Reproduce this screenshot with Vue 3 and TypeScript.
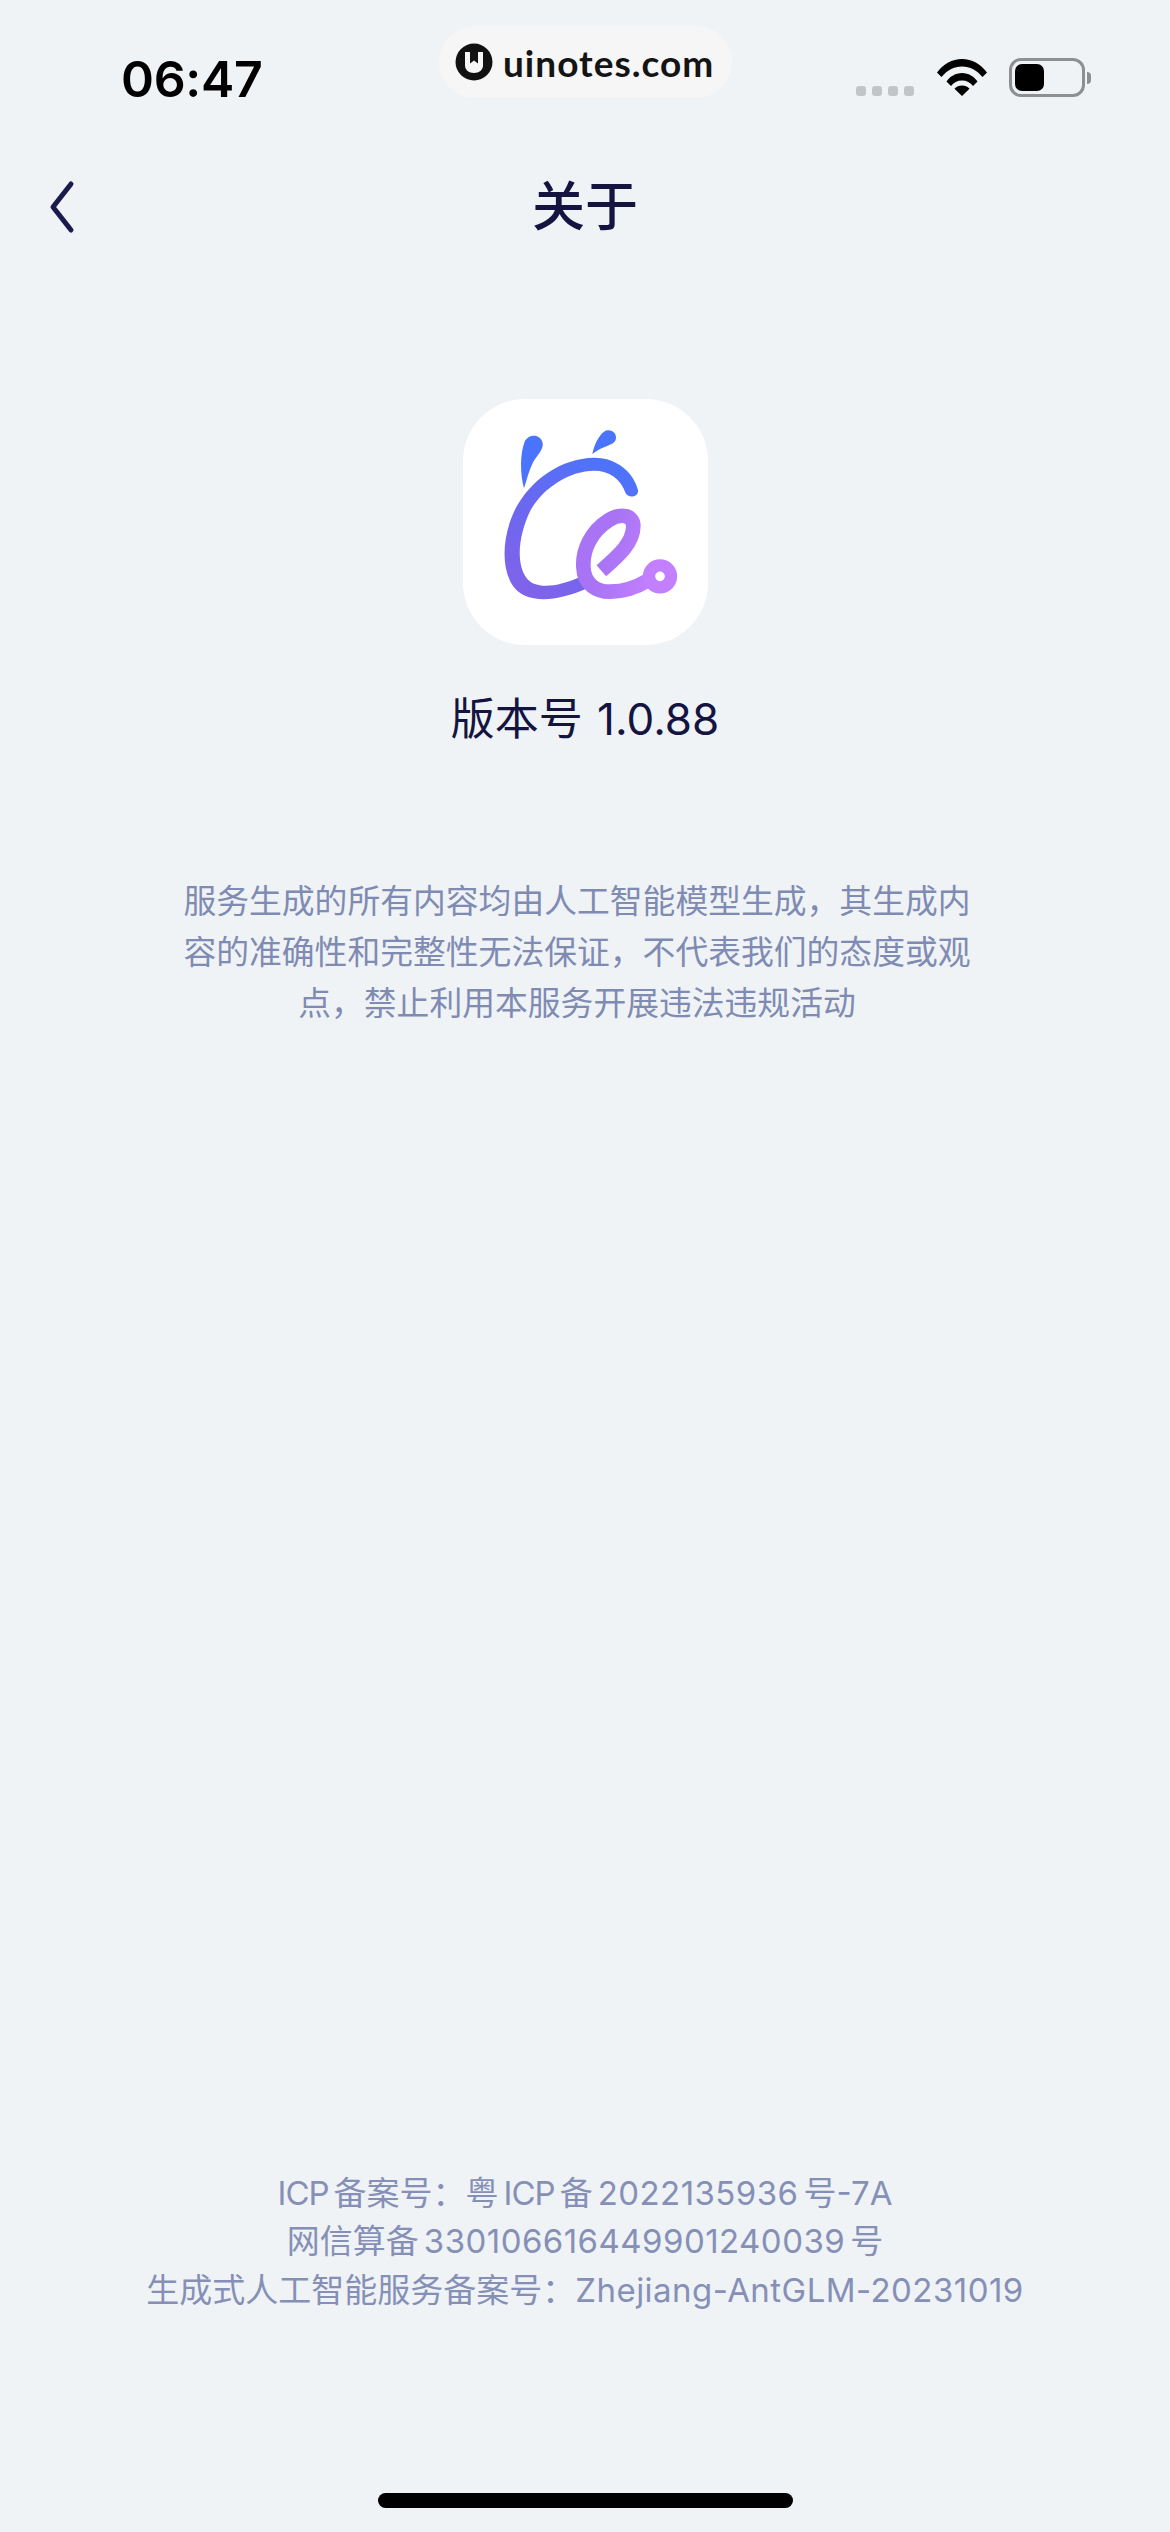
<script setup lang="ts">
const description = '服务生成的所有内容均由人工智能模型生成，其生成内容的准确性和完整性无法保证，不代表我们的态度或观点，禁止利用本服务开展违法违规活动'
const signalDots = [0, 1, 2, 3]
</script>

<template>
  <div class="page">
    <div class="watermark">
      <svg class="watermark-logo" viewBox="0 0 38 38">
        <circle cx="19" cy="19" r="18.5" fill="#111" />
        <path d="M10 9h5v11.500l4-3 4 3V9h5v13.500c0 4.500-3.800 7.500-9 7.500s-9-3-9-7.500z" fill="#f6f6f6" />
      </svg>
      <span class="watermark-text">uinotes.com</span>
    </div>

    <header class="status-bar">
      <span class="time">06:47</span>
      <div class="status-icons">
        <div class="signal">
          <i v-for="d in signalDots" :key="d" />
        </div>
        <svg class="wifi" viewBox="0 0 50 37">
          <path d="M0 13.500C6.500 5 15 0 25 0s18.500 5 25 13.500l-4.500 4.500C40 11.500 33 7.500 25 7.500S10 11.500 4.500 18z" />
          <path d="M9.500 22.500C13 17.500 18.500 14 25 14s12 3.500 15.500 8.500L36 27c-2.500-3.500-6.500-5.500-11-5.500S16.500 23.500 14 27z" />
          <path d="M25 26.500c3 0 5.500 1 7.500 3.200L25 37l-7.500-7.300c2-2.200 4.500-3.200 7.500-3.200z" />
        </svg>
        <div class="battery">
          <div class="battery-fill" />
        </div>
      </div>
    </header>

    <nav class="nav">
      <svg class="back" viewBox="0 0 26 54">
        <path d="M22 4 4 27l18 23" />
      </svg>
      <h1 class="title">关于</h1>
    </nav>

    <main class="about">
      <div class="app-icon">
        <svg viewBox="97 57 735 738">
          <defs>
            <linearGradient id="stemGrad" gradientUnits="userSpaceOnUse" x1="560" y1="240" x2="330" y2="660">
              <stop offset="0" stop-color="#4a74fc" />
              <stop offset="0.5" stop-color="#6a68f0" />
              <stop offset="1" stop-color="#7f63ea" />
            </linearGradient>
            <linearGradient id="loopGrad" gradientUnits="userSpaceOnUse" x1="510" y1="570" x2="660" y2="620">
              <stop offset="0" stop-color="#a874f5" />
              <stop offset="1" stop-color="#c27fff" />
            </linearGradient>
          </defs>
          <path d="M280 325C268 280 268 220 282 185C292 162 325 160 335 185C342 205 320 225 308 245C295 270 288 300 280 325Z" fill="#4a74fc" />
          <path d="M485 222C490 195 505 165 520 155C535 145 558 155 556 175C554 192 535 195 520 202C505 208 495 215 485 222Z" fill="#4a74fc" />
          <path
            d="M622 330C610 280 560 232 490 233C390 235 300 300 255 385C215 465 210 560 245 615C280 670 370 670 470 625L450 590C380 622 310 630 285 590C255 545 265 460 300 390C340 320 420 272 490 272C535 272 570 295 585 340C592 355 625 352 622 330Z"
            fill="url(#stemGrad)"
          />
          <path class="loop" d="M512 572C560 530 608 490 608 438C608 405 570 398 535 420C480 455 456 510 458 560C460 615 500 636 540 635C580 634 620 620 650 602" stroke="url(#loopGrad)" />
          <circle cx="688" cy="589" r="33" fill="none" stroke="#c27fff" stroke-width="37" />
        </svg>
      </div>
      <p class="version">版本号 1.0.88</p>
      <p class="description">{{ description }}</p>
    </main>

    <footer class="records">
      <p><span class="tight">ICP</span><span class="gap" />备案号：粤<span class="gap" /><span class="tight">ICP</span><span class="gap" />备<span class="gap" /><span class="num">2022135936</span><span class="gap" />号-7A</p>
      <p>网信算备<span class="gap" /><span class="num">330106616449901240039</span><span class="gap" />号</p>
      <p>生成式人工智能服务备案号：<span class="num">Zhejiang-AntGLM-20231019</span></p>
    </footer>

    <div class="home-indicator" />
  </div>
</template>

<style>
html,
body {
  margin: 0;
  background: #eff3f6;
}
</style>

<style scoped>
.page {
  position: relative;
  width: 1170px;
  height: 2532px;
  display: flex;
  flex-direction: column;
  overflow: hidden;
  background: #eff3f6;
  font-family: Inter, "Noto Sans CJK SC", sans-serif;
}

.watermark {
  position: absolute;
  top: 26px;
  left: 439px;
  width: 293px;
  height: 72px;
  box-sizing: border-box;
  padding-left: 16px;
  display: flex;
  align-items: center;
  gap: 10px;
  border-radius: 36px;
  background: #f6f6f6;
}

.watermark-logo {
  width: 38px;
  height: 38px;
  flex-shrink: 0;
}

.watermark-text {
  font-family: Lato, sans-serif;
  font-size: 37px;
  font-weight: 700;
  letter-spacing: 1px;
  color: #141414;
}

.status-bar {
  height: 120px;
  box-sizing: border-box;
  padding: 50px 85px 0 121px;
  display: flex;
  justify-content: space-between;
  align-items: flex-start;
}

.time {
  font-size: 50px;
  font-weight: 600;
  letter-spacing: -0.3px;
  line-height: 58px;
  color: #000;
}

.status-icons {
  display: flex;
  align-items: flex-end;
  padding-top: 8px;
}

.signal {
  display: flex;
  gap: 6px;
  margin: 0 23px 1px 0;
}

.signal i {
  width: 10px;
  height: 10px;
  border-radius: 3px;
  background: #c2c4c7;
}

.wifi {
  width: 50px;
  height: 37px;
  margin: 0 22px 1px 0;
}

.battery {
  position: relative;
  width: 76px;
  height: 39px;
  box-sizing: border-box;
  padding: 3px;
  border: 3px solid #8d8f91;
  border-radius: 12px;
}

.battery::after {
  content: "";
  position: absolute;
  top: 11px;
  right: -9px;
  width: 4px;
  height: 12px;
  border-radius: 0 6px 6px 0;
  background: #8d8f91;
}

.battery-fill {
  width: 29px;
  height: 27px;
  border-radius: 7px;
  background: #000;
}

.nav {
  height: 74px;
  position: relative;
  margin-top: 50px;
  display: flex;
  align-items: center;
  justify-content: center;
}

.back {
  position: absolute;
  left: 49px;
  top: 10px;
  width: 26px;
  height: 54px;
}

.back path {
  fill: none;
  stroke: #1b1a4c;
  stroke-width: 5;
  stroke-linecap: round;
  stroke-linejoin: round;
}

.title {
  margin: 0;
  font-size: 53px;
  font-weight: 500;
  line-height: 74px;
  color: #15133f;
}

.about {
  display: flex;
  flex-direction: column;
  align-items: center;
  padding-top: 155px;
}

.app-icon {
  width: 245px;
  height: 246px;
  border-radius: 62px;
  background: #fff;
}

.app-icon svg {
  display: block;
  width: 100%;
  height: 100%;
}

.loop {
  fill: none;
  stroke-width: 44;
}

.version {
  margin: 44px 0 0;
  font-size: 44px;
  word-spacing: 2px;
  line-height: 60px;
  color: #15133f;
}

.description {
  width: 790px;
  margin: 127px 16px 0 0;
  font-size: 32.800px;
  line-height: 51px;
  text-align: center;
  color: #7f8bb2;
}

.records {
  margin-top: auto;
  margin-bottom: 218px;
  text-align: center;
  font-size: 33px;
  line-height: 48.500px;
  color: #8690b6;
}

.records p {
  margin: 0;
}

.gap {
  display: inline-block;
  width: 5px;
}

.tight {
  letter-spacing: -1px;
}

.num {
  letter-spacing: 0.45px;
}

.home-indicator {
  position: absolute;
  left: 378px;
  bottom: 24px;
  width: 415px;
  height: 15px;
  border-radius: 8px;
  background: #000;
}
</style>
